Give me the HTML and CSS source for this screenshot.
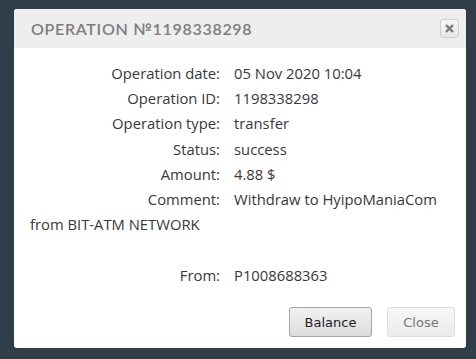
FILE: index.html
```html
<!DOCTYPE html>
<html>
<head>
<meta charset="utf-8">
<link rel="stylesheet" href="styles.css">
</head>
<body>
<div class="dialog">
  <div class="header">
    <span class="title">OPERATION №1198338298</span>
    <button class="x" aria-label="close"><svg width="9" height="9" viewBox="0 0 9 9"><path d="M1 1 L8 8 M8 1 L1 8" stroke="#7a7a7a" stroke-width="2.4" stroke-linecap="butt"/></svg></button>
  </div>
  <div class="body">
    <div class="row"><span class="lbl">Operation date:</span><span class="val">05 Nov 2020 10:04</span></div>
    <div class="row"><span class="lbl">Operation ID:</span><span class="val">1198338298</span></div>
    <div class="row"><span class="lbl">Operation type:</span><span class="val">transfer</span></div>
    <div class="row"><span class="lbl">Status:</span><span class="val">success</span></div>
    <div class="row"><span class="lbl">Amount:</span><span class="val">4.88 $</span></div>
    <div class="row"><span class="lbl">Comment:</span><span class="val">Withdraw to HyipoManiaCom</span> <span class="val">from BIT-ATM NETWORK</span></div>
    <div class="row empty"></div>
    <div class="row"><span class="lbl">From:</span><span class="val">P1008688363</span></div>
  </div>
  <div class="footer">
    <button class="btn primary">Balance</button>
    <button class="btn light">Close</button>
  </div>
</div>
</body>
</html>
```
FILE: styles.css
```css
html, body { margin: 0; padding: 0; }
body {
  background: #2f3e48;
  width: 476px;
  height: 359px;
  overflow: hidden;
  padding-top: 9px;
  box-sizing: border-box;
}
.dialog {
  margin-left: 14px;
  width: 452px;
  height: 339px;
  background: #fff;
  border-radius: 3px;
  overflow: hidden;
  display: flex;
  flex-direction: column;
}
.header {
  height: 39px;
  background: #eeeeee;
  display: flex;
  align-items: center;
  justify-content: space-between;
  padding: 0 7px 0 17px;
  box-sizing: border-box;
}
.title {
  font-family: "Lato", sans-serif;
  font-size: 16px;
  letter-spacing: 0.7px;
  color: #7d7d7d;
  font-weight: 600;
}
.x {
  width: 19px;
  height: 19px;
  padding: 0;
  border: 1px solid #cfcfcf;
  border-radius: 3px;
  background: linear-gradient(#f6f6f6, #e6e6e6);
  display: flex;
  align-items: center;
  justify-content: center;
}
.body {
  padding: 13px 16px 0 16px;
  font-family: "Open Sans", sans-serif;
  font-size: 14.8px;
  color: #383838;
  line-height: 25.2px;
}
.row { min-height: 25.2px; }
.lbl {
  display: inline-block;
  width: 190px;
  text-align: right;
  margin-right: 14px;
}
.footer {
  margin-top: auto;
  display: flex;
  justify-content: flex-end;
  gap: 15px;
  padding: 0 11px 11px 0;
}
.btn {
  height: 30px;
  font-family: "DejaVu Sans", sans-serif;
  font-size: 13px;
  border-radius: 3px;
  padding: 0;
}
.primary {
  width: 83px;
  color: #222;
  border: 1px solid #a5a5a5;
  background: linear-gradient(#f2f2f2, #dcdcdc);
}
.light {
  width: 68px;
  color: #777;
  border: 1px solid #dddddd;
  background: linear-gradient(#f7f7f7, #ececec);
}
```
